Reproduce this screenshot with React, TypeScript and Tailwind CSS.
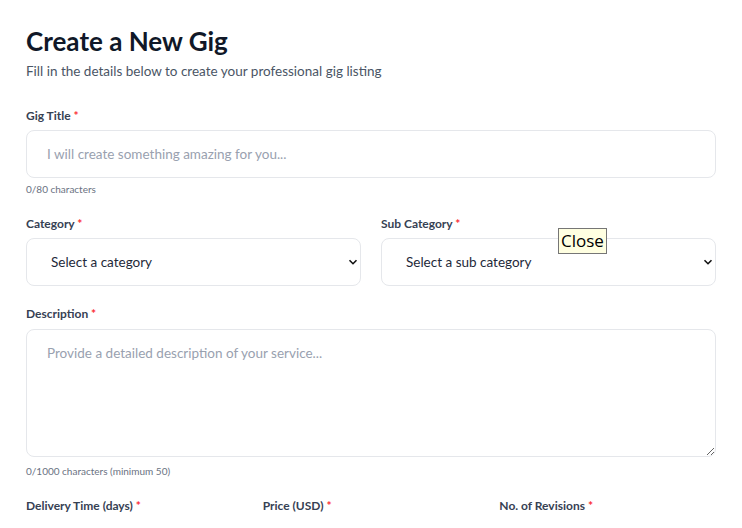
import { useState } from "react";

const Label = ({ text, gap = "mb-[6px]" }: { text: string; gap?: string }) => (
  <label className={`block text-[12px] leading-4 font-bold text-gray-700 ${gap}`}>
    {text} <span className="text-red-500">*</span>
  </label>
);

const Chevron = () => (
  <svg className="pointer-events-none absolute right-[3px] top-1/2 -translate-y-1/2" width="10" height="10" viewBox="0 0 10 10">
    <path d="M1.5 3.2 L5 6.7 L8.5 3.2" fill="none" stroke="#111" strokeWidth="1.6" />
  </svg>
);

const App = () => {
  const [title, setTitle] = useState("");
  const [desc, setDesc] = useState("");

  return (
    <div className="relative min-h-screen bg-white font-['Lato','Open_Sans',sans-serif]">
      <div className="px-[26px] pt-[25px]">
        <h1 className="text-[26px] leading-8 font-bold text-gray-900">Create a New Gig</h1>
        <p className="mt-[4px] text-[13.5px] leading-5 text-gray-600">
          Fill in the details below to create your professional gig listing
        </p>

        <div className="mt-[27px]">
          <Label text="Gig Title" />
          <input
            value={title}
            onChange={(e) => setTitle(e.target.value)}
            placeholder="I will create something amazing for you..."
            className="block w-full h-[48px] rounded-lg border border-gray-200 px-5 text-[13.5px] text-gray-800 placeholder:text-gray-400 outline-none"
          />
          <p className="mt-[4px] text-[10px] leading-[14px] text-gray-500">{title.length}/80 characters</p>
        </div>

        <div className="mt-[20px] grid grid-cols-2 gap-5">
          <div>
            <Label text="Category" />
            <div className="relative">
              <select className="block w-full h-[48px] appearance-none rounded-lg border border-gray-200 bg-white pl-6 pr-8 text-[13.5px] text-gray-800 outline-none">
                <option>Select a category</option>
              </select>
              <Chevron />
            </div>
          </div>
          <div>
            <Label text="Sub Category" />
            <div className="relative">
              <select className="block w-full h-[48px] appearance-none rounded-lg border border-gray-200 bg-white pl-6 pr-8 text-[13.5px] text-gray-800 outline-none">
                <option>Select a sub category</option>
              </select>
              <Chevron />
            </div>
          </div>
        </div>

        <div className="mt-[20px]">
          <Label text="Description" gap="mb-[7px]" />
          <textarea
            value={desc}
            onChange={(e) => setDesc(e.target.value)}
            placeholder="Provide a detailed description of your service..."
            className="block w-full h-[128px] rounded-lg border border-gray-200 px-5 py-[13px] text-[13.5px] text-gray-800 placeholder:text-gray-400 outline-none"
          />
          <p className="mt-[7px] text-[10px] leading-[14px] text-gray-500">{desc.length}/1000 characters (minimum 50)</p>
        </div>

        <div className="mt-[20px] grid grid-cols-3 gap-5">
          <Label text="Delivery Time (days)" />
          <Label text="Price (USD)" />
          <Label text="No. of Revisions" />
        </div>
      </div>

      <div className="absolute left-[558px] top-[228px] h-[26px] border border-[#767676] bg-[#ffffe1] px-[2px] font-['Open_Sans',sans-serif] text-[17px] leading-[24px] text-black">
        Close
      </div>
    </div>
  );
};

export default App;
